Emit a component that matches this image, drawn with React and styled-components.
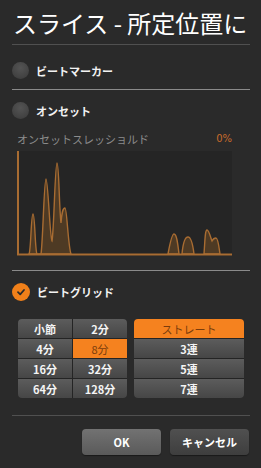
import React from 'react'
import styled, { createGlobalStyle } from 'styled-components'

const Global = createGlobalStyle`
  html, body { margin: 0; padding: 0; background: #2a2a2a; }
  body { font-family: "Noto Sans CJK JP", "Noto Sans", sans-serif; }
`

const Panel = styled.div`
  width: 261px;
  height: 468px;
  box-sizing: border-box;
  padding: 0 11px 0 12px;
  background: #2a2a2a;
  color: #fff;
  display: flex;
  flex-direction: column;
`

const Title = styled.h1`
  margin: 0;
  height: 44px;
  display: flex;
  align-items: center;
  padding-left: 1px;
  font-size: 24px;
  font-weight: 400;
  color: #fff;
  white-space: nowrap;
`

const Divider = styled.div`
  height: 1px;
  background: ${p => p.$light ? '#8a8a8a' : '#505050'};
  flex-shrink: 0;
`

const OptionRow = styled.div`
  display: flex;
  align-items: center;
  gap: 7px;
  margin: ${p => p.$margin};
  font-size: 11px;
  font-weight: 700;
  color: #f2f2f2;
`

const Radio = styled.span`
  width: 17px;
  height: 17px;
  border-radius: 50%;
  background: radial-gradient(circle at 50% 35%, #545454 0%, #424242 70%, #3a3a3a 100%);
  flex-shrink: 0;
`

const Check = styled.span`
  width: 18px;
  height: 18px;
  border-radius: 50%;
  background: #f0801a;
  display: flex;
  align-items: center;
  justify-content: center;
  flex-shrink: 0;
`

const ThresholdRow = styled.div`
  display: flex;
  justify-content: space-between;
  align-items: center;
  width: 215px;
  margin: 13px 0 0 5px;
  font-size: 11px;
  color: #8c8c8c;
  height: 14px;
  line-height: 14px;
`

const Percent = styled.span`
  color: #c86a2a;
  font-family: "DejaVu Sans", sans-serif;
  font-size: 10px;
  white-space: nowrap;
`

const Chart = styled.svg`
  display: block;
  margin: 5px 0 14px 5px;
  background: #252525;
`

const GridArea = styled.div`
  display: flex;
  gap: 7px;
  margin: 18px 0 17px 6px;
`

const Group = styled.div`
  display: grid;
  grid-template-columns: ${p => p.$cols};
  grid-auto-rows: 19px;
  gap: 1px;
  width: ${p => p.$width}px;
  background: #242424;
  border-radius: 4px;
  overflow: hidden;
`

const Cell = styled.div`
  display: flex;
  align-items: center;
  justify-content: center;
  font-size: 11px;
  color: ${p => p.$on ? '#7a3c0c' : '#f4f4f4'};
  background: ${p => p.$on
    ? '#f5821f'
    : 'linear-gradient(#5c5c5c, #464646)'};
  font-weight: ${p => p.$on ? 400 : 700};
`

const Footer = styled.div`
  display: flex;
  justify-content: flex-end;
  gap: 9px;
  margin-top: 13px;
  padding-right: 1px;
`

const Button = styled.button`
  width: 79px;
  height: 26px;
  border: none;
  border-radius: 4px;
  font-family: inherit;
  font-size: 11px;
  font-weight: 700;
  color: #fff;
  background: ${p => p.$primary
    ? 'linear-gradient(#727272, #5a5a5a)'
    : 'linear-gradient(#505050, #3e3e3e)'};
  box-shadow: 0 1px 1px rgba(0,0,0,0.4);
`

const left = [['小節', false], ['2分', false], ['4分', false], ['8分', true], ['16分', false], ['32分', false], ['64分', false], ['128分', false]]
const right = [['ストレート', true], ['3連', false], ['5連', false], ['7連', false]]

const wave1 = 'M12 103 C14 100 14 63 16 63 C18 63 18 100 20 103 L24 103 C26 90 27 28 29 28 C31 28 33 88 35 90 C37 80 38 12 40 12 C42 12 42 55 44 72 C45 60 46 57 48 57 C50 57 51 95 54 103 Z'
const wave2 = 'M151 103 C153 92 155 83 157 83 C160 83 161 95 162 103 Z M165 103 C166 92 168 86 171 86 C174 86 176 95 177 103 Z M187 103 C188 90 188 79 190 79 C192 79 194 88 195 90 C196 88 197 87 199 87 C201 87 202 96 203 103 Z'

export default function App() {
  return (
    <Panel>
      <Global />
      <Title>スライス - 所定位置に</Title>
      <Divider />
      <OptionRow $margin="17px 0 10px 0"><Radio />ビートマーカー</OptionRow>
      <Divider $light />
      <OptionRow $margin="12px 0 0 0"><Radio />オンセット</OptionRow>
      <ThresholdRow>
        <span>オンセットスレッショルド</span>
        <Percent>0%</Percent>
      </ThresholdRow>
      <Chart width="215" height="105" viewBox="0 0 215 105">
        <path d={wave1} fill="#4e3a24" stroke="#a86c32" strokeWidth="1.4" />
        <path d={wave2} fill="#4e3a24" stroke="#a86c32" strokeWidth="1.4" />
        <line x1="1" y1="0" x2="1" y2="104" stroke="#a86c32" strokeWidth="2" />
        <line x1="0" y1="103.5" x2="215" y2="103.5" stroke="#a86c32" strokeWidth="2" />
      </Chart>
      <Divider $light />
      <OptionRow $margin="12px 0 0 0">
        <Check>
          <svg width="10" height="10" viewBox="0 0 10 10">
            <path d="M2 5.2 L4.2 7.3 L8 3" fill="none" stroke="#2a2a2a" strokeWidth="1.8" strokeLinecap="round" strokeLinejoin="round" />
          </svg>
        </Check>
        ビートグリッド
      </OptionRow>
      <GridArea>
        <Group $cols="1fr 1fr" $width={109}>
          {left.map(([t, on]) => <Cell key={t} $on={on}>{t}</Cell>)}
        </Group>
        <Group $cols="1fr" $width={110}>
          {right.map(([t, on]) => <Cell key={t} $on={on}>{t}</Cell>)}
        </Group>
      </GridArea>
      <Divider />
      <Footer>
        <Button $primary>OK</Button>
        <Button>キャンセル</Button>
      </Footer>
    </Panel>
  )
}
